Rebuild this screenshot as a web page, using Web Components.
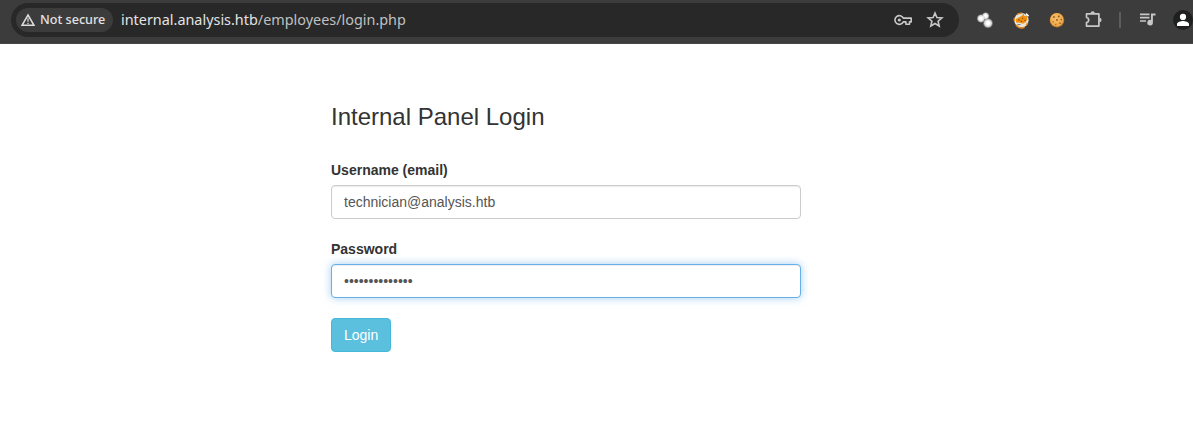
<!DOCTYPE html>
<html lang="en">
<head>
<meta charset="utf-8">
<title>Internal Panel Login</title>
<style>body{margin:0;background:#fff;font-family:"Liberation Sans",Arial,sans-serif}</style>
</head>
<body>
<browser-bar>
  <security-chip slot="chip">Not secure</security-chip>
  <span slot="host">internal.analysis.htb</span><span slot="path">/employees/login.php</span>
  <bar-icon slot="action" name="key"></bar-icon>
  <bar-icon slot="action" name="star"></bar-icon>
  <bar-icon slot="tool" name="proxy"></bar-icon>
  <bar-icon slot="tool" name="fox"></bar-icon>
  <bar-icon slot="tool" name="cookie"></bar-icon>
  <bar-icon slot="tool" name="puzzle"></bar-icon>
  <bar-icon slot="media" name="music"></bar-icon>
  <bar-icon slot="media" name="profile"></bar-icon>
</browser-bar>
<login-panel>
  <span slot="title">Internal Panel Login</span>
  <form-field label="Username (email)">technician@analysis.htb</form-field>
  <form-field label="Password" focused>••••••••••••••</form-field>
  <info-button>Login</info-button>
</login-panel>
<script>
function define(name, html) {
  customElements.define(name, class extends HTMLElement {
    constructor() {
      super();
      this.attachShadow({ mode: 'open' }).innerHTML = html;
    }
    connectedCallback() {
      const label = this.shadowRoot.querySelector('label');
      if (label) label.textContent = this.getAttribute('label');
    }
  });
}

const icons = {
  key: `<g fill="none" stroke="#c7c7c7" stroke-width="1.6"><path d="M10.3 8.1A4.4 4.4 0 1 0 10.3 11.9H12.9V14.2H16.5V11.9H18.2V8.1Z" stroke-linejoin="round"/></g><circle cx="6.3" cy="10" r="1.6" fill="#c7c7c7"/>`,
  star: `<path d="M10 3 11.9 7.5 16.9 7.9 13.1 11.2 14.2 16 10 13.5 5.8 16 6.9 11.2 3.1 7.9 8.1 7.5Z" fill="none" stroke="#c7c7c7" stroke-width="1.6"/>`,
  proxy: `<defs><radialGradient id="w"><stop offset=".3" stop-color="#fff"/><stop offset=".65" stop-color="#eee" stop-opacity=".85"/><stop offset="1" stop-color="#aaa" stop-opacity="0"/></radialGradient></defs><circle cx="10.6" cy="6" r="4.1" fill="url(#w)"/><circle cx="6" cy="8.5" r="4.6" fill="url(#w)"/><circle cx="13" cy="13.2" r="5.4" fill="url(#w)"/>`,
  fox: `<circle cx="10.4" cy="10.3" r="7.2" fill="#e7e4dd"/><path d="M5 9 8.5 7 10.8 5.7 12.6 3.7 13.4 6 16 6.2 16.2 9.5 14.8 12.3 11.8 13.7 9 12.7 5 12.5Z" fill="#f09010"/><path d="M6 4.6A7 7 0 0 1 11 3.2M16.6 12.8a7 7 0 0 1-1.6 2.7M5 14.9a7.2 7.2 0 0 0 8.6 2.3M3.3 8v3" fill="none" stroke="#e88c20" stroke-width="1.5"/><path d="M15 3.6 17.6 6.2" stroke="#fff" stroke-width="1.6"/><path d="M7.2 9.8h1.5M11 8.4h1.2M9.7 11.4h1.4M13.4 10.4h1.2" stroke="#8d4c05" stroke-width="1.2"/><path d="M6.5 14.6h3" stroke="#555" stroke-width=".8"/>`,
  cookie: `<circle cx="10" cy="10.2" r="7.2" fill="#c67d2b"/><circle cx="9.7" cy="9.7" r="6.6" fill="#efad50"/><circle cx="9" cy="8.4" r="4" fill="#f8c875" opacity=".45"/><g fill="#804516" opacity=".85"><circle cx="7" cy="7" r=".9"/><circle cx="11.7" cy="6.5" r=".9"/><circle cx="10" cy="10" r=".9"/><circle cx="14.3" cy="9.6" r=".8"/><circle cx="6.1" cy="11.7" r=".6"/><circle cx="13" cy="13.3" r=".8"/><circle cx="8.8" cy="14.4" r=".6"/></g>`,
  puzzle: `<path d="M3.5 3.9H15.9V16.1H3.5V12.6C6.4 12.1 6.4 8 3.5 7.5Z" fill="none" stroke="#c7c7c7" stroke-width="1.7" stroke-linejoin="round"/><path d="M7.5 3.4a2.2 2.2 0 0 1 4.4 0ZM16.3 7.7a2.3 2.3 0 0 1 0 4.6Z" fill="#c7c7c7"/>`,
  music: `<path d="M2 4.4h9.5M2 7.7h9.5M2 11h6" stroke="#c7c7c7" stroke-width="1.7"/><path d="M13 3.5h4.5v1.9H14.9v7.2A2.8 2.8 0 1 1 13 10Z" fill="#c7c7c7"/>`,
  profile: `<circle cx="10" cy="10" r="10" fill="#1e2020"/><circle cx="10" cy="6.9" r="3.1" fill="#fff"/><path d="M4 16v-2c0-2.1 4-3.1 6-3.1s6 1 6 3.1v2Z" fill="#fff"/>`
};
customElements.define('bar-icon', class extends HTMLElement {
  constructor() { super(); this.attachShadow({ mode: 'open' }); }
  connectedCallback() {
    this.shadowRoot.innerHTML = `<style>:host{display:block;flex:none;width:20px;height:20px}svg{display:block;overflow:visible}</style>
      <svg width="20" height="20" viewBox="0 0 20 20" aria-hidden="true">${icons[this.getAttribute('name')]}</svg>`;
  }
});

define('security-chip', `<style>
  :host{display:flex;align-items:center;box-sizing:border-box;width:97px;height:24px;padding-left:5px;gap:5px;border-radius:12px;background:#3c3c3c;color:#e3e3e3;font:500 12.6px/24px "Noto Sans",sans-serif;white-space:nowrap}
  svg{flex:none}
  </style><svg width="14" height="14" viewBox="0 0 14 14"><path d="M7 2 13 12.3H1Z" fill="none" stroke="#dedede" stroke-width="1.5"/><path d="M7 5.3v3.5M7 9.8v1.3" stroke="#dedede" stroke-width="1.2"/></svg><slot></slot>`);

define('browser-bar', `<style>
  :host{display:flex;box-sizing:border-box;height:44px;padding:3px 0 0 11px;background:#3c3c3c;border-bottom:1px solid #464446;overflow:hidden}
  .address{display:flex;align-items:center;box-sizing:border-box;width:948px;height:34px;padding:0 14px 0 5px;border-radius:17px;background:#282828;flex:none}
  .url{flex:1;margin-left:8px;font:14.4px/34px "Noto Sans",sans-serif;color:#e3e3e3;white-space:nowrap}
  .path{color:#c0c0c0}
  .actions{display:flex;gap:12px}
  .tools{display:flex;align-items:center;gap:16px;height:34px;margin-left:16px;flex:none}
  .media{display:flex;align-items:center;gap:15px;height:34px;margin-left:17px;flex:none}
  i{width:2px;height:16px;margin:9px 0 0 16px;background:#5c5c5c;flex:none}
  </style><div class="address"><slot name="chip"></slot><div class="url"><slot name="host"></slot><span class="path"><slot name="path"></slot></span></div><div class="actions"><slot name="action"></slot></div></div>
  <div class="tools"><slot name="tool"></slot></div><i></i><div class="media"><slot name="media"></slot></div>`);

define('login-panel', `<style>
  :host{display:block;width:470px;margin:60px 0 0 331px;color:#333}
  h1{margin:0 0 30px;font:400 24px/26px "Liberation Sans",Arial,sans-serif}
  </style><h1><slot name="title"></slot></h1><slot></slot>`);

define('form-field', `<style>
  :host{display:block;margin-bottom:20px;font-size:14px;line-height:20px}
  label{display:block;margin-bottom:5px;font-weight:700}
  .input{box-sizing:border-box;height:34px;padding:6px 12px;border:1px solid #ccc;border-radius:4px;background:#fff;color:#555;box-shadow:inset 0 1px 1px rgba(0,0,0,.075)}
  :host([focused]) .input{border-color:#66afe9;box-shadow:inset 0 1px 1px rgba(0,0,0,.075),0 0 8px rgba(102,175,233,.6)}
  </style><label></label><div class="input"><slot></slot></div>`);

define('info-button', `<style>
  :host{display:block;width:60px}
  button{box-sizing:border-box;width:60px;height:34px;padding:6px 12px;border:1px solid #46b8da;border-radius:4px;background:#5bc0de;color:#fff;font:14px/20px "Liberation Sans",Arial,sans-serif}
  </style><button type="button"><slot></slot></button>`);
</script>
</body>
</html>
